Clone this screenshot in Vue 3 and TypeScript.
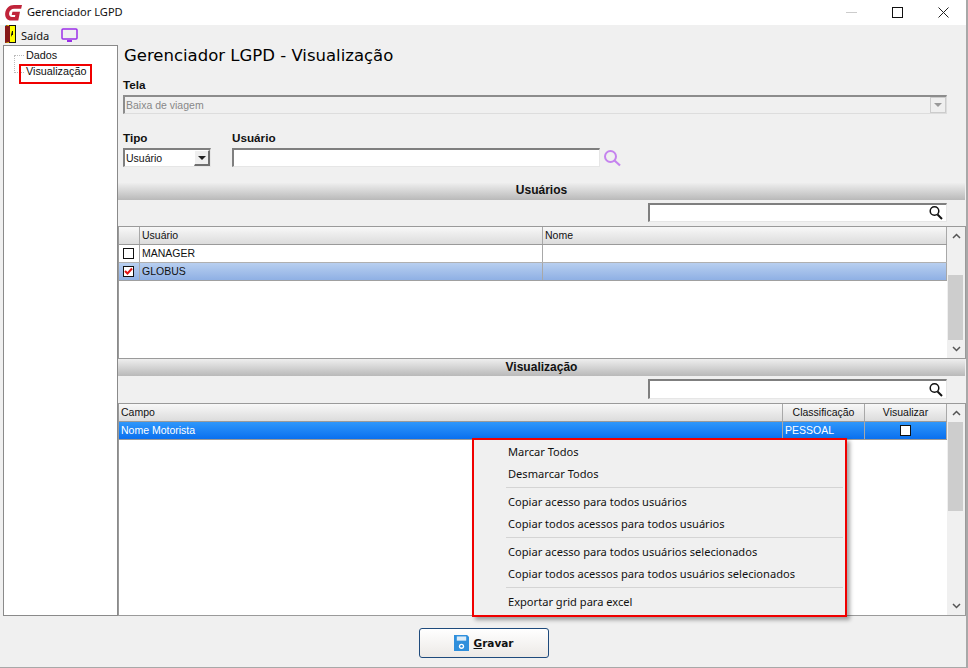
<script setup lang="ts">
const menuGroups: string[][] = [
  ['Marcar Todos', 'Desmarcar Todos'],
  ['Copiar acesso para todos usuários', 'Copiar todos acessos para todos usuários'],
  ['Copiar acesso para todos usuários selecionados', 'Copiar todos acessos para todos usuários selecionados'],
  ['Exportar grid para excel'],
]
</script>

<template>
  <div class="window">
    <header class="titlebar">
      <svg class="logo" viewBox="0 0 16 16" width="17" height="17">
        <path d="M16 1H8.500C4 1 .8 4.200 .2 8.500-.3 12.500 2 15.500 5.500 15.500H12.500l1.600-8.300H7L6.300 10.300h3.400L9.400 12.200H6.500C4.500 12.200 3.600 10.500 3.900 8.500 4.300 6 6.200 4.500 8.500 4.500H15.200z" fill="#c0243a" />
      </svg>
      <span class="title-text">Gerenciador LGPD</span>
      <div class="win-buttons">
        <svg width="11" height="11" viewBox="0 0 11 11"><path d="M0 5.500h11" stroke="#ccc" /></svg>
        <svg width="11" height="11" viewBox="0 0 11 11"><rect x=".5" y=".5" width="10" height="10" fill="none" stroke="#111" /></svg>
        <svg width="11" height="11" viewBox="0 0 11 11"><path d="M.5 .5l10 10M10.500 .5l-10 10" stroke="#222" /></svg>
      </div>
    </header>

    <div class="toolbar">
      <svg class="door" width="11" height="18" viewBox="0 0 11 18">
        <rect x="0" y="0" width="11" height="18" fill="#ffff00" />
        <path d="M10 0h1v18h-1zM4 0h7v1H4zM4 17h7v1H4z" fill="#111" />
        <path d="M0 0l5 1v16l-5 1z" fill="#861818" />
        <rect x="0" y="0" width="1" height="1" fill="#5ad0e8" />
        <path d="M7 6h1v4H7l-1 2v-2z" fill="#111" />
      </svg>
      <span class="exit">Saída</span>
      <svg class="monitor" width="17" height="14" viewBox="0 0 17 14">
        <rect x="1" y="1" width="15" height="10" rx="1" fill="none" stroke="#9a2ee8" stroke-width="1.500" />
        <path d="M6 13h5" stroke="#9a2ee8" stroke-width="2" />
      </svg>
    </div>

    <div class="content">
      <aside class="tree">
        <div class="tree-lines"></div>
        <div class="tree-item">Dados</div>
        <div class="tree-item">Visualização</div>
      </aside>

      <main class="main">
        <h1 class="heading">Gerenciador LGPD - Visualização</h1>

        <div class="field-block">
          <label class="label">Tela</label>
          <div class="combo disabled">
            <span>Baixa de viagem</span>
            <span class="combo-arrow flat"><i></i></span>
          </div>
        </div>

        <div class="filters">
          <div class="tipo">
            <label class="label">Tipo</label>
            <div class="combo small">
              <span>Usuário</span>
              <span class="combo-arrow"><i></i></span>
            </div>
          </div>
          <div class="usuario">
            <label class="label">Usuário</label>
            <div class="user-row">
              <div class="inset user-input"></div>
              <svg class="lookup" width="19" height="19" viewBox="0 0 19 19">
                <circle cx="7.500" cy="7.500" r="5.500" fill="none" stroke="#c583ee" stroke-width="2" />
                <path d="M11.500 11.500L17 16.500" stroke="#c583ee" stroke-width="2.200" />
              </svg>
            </div>
          </div>
        </div>

        <div class="section first">Usuários</div>
        <div class="search-row">
          <div class="inset search">
            <svg width="16" height="16" viewBox="0 0 16 16">
              <circle cx="6.500" cy="6" r="4.300" fill="none" stroke="#111" stroke-width="1.500" />
              <path d="M9.500 9.500L14 14" stroke="#111" stroke-width="2" />
            </svg>
          </div>
        </div>

        <div class="grid users">
          <div class="grid-body">
            <div class="row head">
              <div class="cell c-check"></div>
              <div class="cell c-user">Usuário</div>
              <div class="cell c-fill">Nome</div>
            </div>
            <div class="row">
              <div class="cell c-check"><span class="box"></span></div>
              <div class="cell c-user">MANAGER</div>
              <div class="cell c-fill"></div>
            </div>
            <div class="row picked">
              <div class="cell c-check">
                <span class="box">
                  <svg width="9" height="9" viewBox="0 0 9 9"><path d="M1 4l2.500 2.500L8 1.500" fill="none" stroke="#e01010" stroke-width="2" /></svg>
                </span>
              </div>
              <div class="cell c-user">GLOBUS</div>
              <div class="cell c-fill"></div>
            </div>
          </div>
          <div class="scrollbar">
            <span class="sb-btn"><svg width="9" height="6" viewBox="0 0 9 6"><path d="M1 5l3.500-3.500L8 5" fill="none" stroke="#555" stroke-width="1.500" /></svg></span>
            <span class="thumb-space"></span>
            <span class="thumb short"></span>
            <span class="sb-btn"><svg width="9" height="6" viewBox="0 0 9 6"><path d="M1 1l3.500 3.500L8 1" fill="none" stroke="#555" stroke-width="1.500" /></svg></span>
          </div>
        </div>

        <div class="section second-bar">Visualização</div>
        <div class="search-row second">
          <div class="inset search">
            <svg width="16" height="16" viewBox="0 0 16 16">
              <circle cx="6.500" cy="6" r="4.300" fill="none" stroke="#111" stroke-width="1.500" />
              <path d="M9.500 9.500L14 14" stroke="#111" stroke-width="2" />
            </svg>
          </div>
        </div>

        <div class="grid fields">
          <div class="grid-body">
            <div class="row head">
              <div class="cell c-fill">Campo</div>
              <div class="cell c-class center">Classificação</div>
              <div class="cell c-view center">Visualizar</div>
            </div>
            <div class="row selected">
              <div class="cell c-fill">Nome Motorista</div>
              <div class="cell c-class">PESSOAL</div>
              <div class="cell c-view center"><span class="box"></span></div>
            </div>
          </div>
          <div class="scrollbar">
            <span class="sb-btn"><svg width="9" height="6" viewBox="0 0 9 6"><path d="M1 5l3.500-3.500L8 5" fill="none" stroke="#555" stroke-width="1.500" /></svg></span>
            <span class="thumb long"></span>
            <span class="thumb-space"></span>
            <span class="sb-btn"><svg width="9" height="6" viewBox="0 0 9 6"><path d="M1 1l3.500 3.500L8 1" fill="none" stroke="#555" stroke-width="1.500" /></svg></span>
          </div>
        </div>
      </main>
    </div>

    <footer class="footer">
      <button class="save" type="button">
        <svg width="15" height="16" viewBox="0 0 16 17">
          <path d="M0 0h14l2 2v15H0z" fill="#2f8fdc" />
          <rect x="3" y="1.500" width="10" height="4.500" fill="#dcecf8" />
          <circle cx="8" cy="12" r="2.800" fill="#fff" />
          <circle cx="8" cy="12" r="1.300" fill="#2f8fdc" />
        </svg>
        <span><u>G</u>ravar</span>
      </button>
    </footer>

    <div class="red-mark"></div>

    <div class="context-menu">
      <template v-for="(group, i) in menuGroups" :key="i">
        <div v-if="i > 0" class="menu-sep"></div>
        <div v-for="item in group" :key="item" class="menu-item">{{ item }}</div>
      </template>
    </div>
  </div>
</template>

<style scoped>
.window {
  position: relative;
  width: 968px;
  height: 668px;
  overflow: hidden;
  display: flex;
  flex-direction: column;
  background: #f0f0f0;
  border-right: 2px solid #a8a8a8;
  border-bottom: 1px solid #a8a8a8;
  box-sizing: border-box;
  font-family: "Liberation Sans", Arial, sans-serif;
  font-size: 10.500px;
  color: #111;
}
.titlebar {
  height: 25px;
  flex: none;
  display: flex;
  align-items: center;
  padding-left: 5px;
  background: #fff;
}
.logo { margin-right: 5px; }
.title-text {
  font-family: "Noto Sans", sans-serif;
  font-size: 11.100px;
  padding-bottom: 2px;
}
.win-buttons {
  margin-left: auto;
  display: flex;
  align-items: center;
  gap: 35px;
  padding-right: 17px;
}
.toolbar {
  height: 20px;
  flex: none;
  display: flex;
  align-items: center;
  padding-left: 5px;
  font-family: "Noto Sans", sans-serif;
  font-size: 11.100px;
}
.door { margin-top: -2px; flex: none; }
.exit { margin-left: 5px; }
.monitor { margin-left: 12px; }
.content {
  flex: 1;
  min-height: 0;
  display: flex;
  padding-left: 3px;
}
.tree {
  position: relative;
  width: 115px;
  flex: none;
  box-sizing: border-box;
  background: #fff;
  border: 1px solid #8a8a8a;
  padding: 2px 0 0 22px;
  font-size: 10.800px;
}
.tree-item { height: 16px; line-height: 14px; }
.tree-lines {
  position: absolute;
  left: 10px;
  top: 9px;
  width: 9px;
  height: 16px;
  border-left: 1px dotted #bbb;
  border-top: 1px dotted #bbb;
  border-bottom: 1px dotted #bbb;
}
.main {
  flex: 1;
  min-width: 0;
  display: flex;
  flex-direction: column;
  padding-right: 1px;
}
.heading {
  margin: 0;
  height: 34px;
  line-height: 21px;
  padding-left: 6px;
  font-family: "DejaVu Sans", sans-serif;
  font-size: 16.500px;
  font-weight: 400;
  color: #000;
}
.label {
  display: block;
  height: 16px;
  line-height: 12px;
  font-size: 11.700px;
  font-weight: 700;
}
.field-block {
  padding-left: 5px;
  padding-right: 18px;
}
.inset, .combo {
  box-sizing: border-box;
  background: #fff;
  border-top: 2px solid #7f7f7f;
  border-left: 2px solid #7f7f7f;
  border-right: 1px solid #e6e6e6;
  border-bottom: 1px solid #e6e6e6;
}
.combo {
  height: 19px;
  display: flex;
  align-items: center;
  justify-content: space-between;
  padding-left: 1px;
}
.combo.disabled {
  background: #f0f0f0;
  color: #888;
  border-color: #8c8c8c #ddd #ddd #8c8c8c;
}
.combo.small { width: 88px; }
.combo-arrow {
  width: 16px;
  height: 16px;
  display: flex;
  align-items: center;
  justify-content: center;
  background: #efefef;
  border-right: 2px solid #6f6f6f;
  border-bottom: 2px solid #6f6f6f;
  box-sizing: border-box;
  border-top: 1px solid #fff;
  border-left: 1px solid #fff;
}
.combo-arrow.flat {
  border-color: #ccc;
  border-width: 1px;
  border-style: solid;
}
.combo-arrow i {
  width: 0;
  height: 0;
  border-left: 4px solid transparent;
  border-right: 4px solid transparent;
  border-top: 4px solid #222;
}
.combo-arrow.flat i { border-top-color: #999; }
.filters {
  display: flex;
  gap: 21px;
  padding-left: 5px;
  margin-top: 18px;
}
.user-row {
  display: flex;
  align-items: flex-start;
  gap: 3px;
}
.user-input {
  width: 368px;
  height: 19px;
}
.lookup { margin-top: 1px; }
.section {
  height: 17px;
  flex: none;
  text-align: center;
  line-height: 14px;
  font-size: 12px;
  font-weight: 700;
  background: linear-gradient(#eeeeee, #b9b9b9);
}
.section.first { margin-top: 15px; }
.section.second-bar { line-height: 16px; }
.search-row {
  display: flex;
  justify-content: flex-end;
  padding: 3px 18px 4px 0;
  flex: none;
}
.search {
  width: 299px;
  height: 19px;
  display: flex;
  justify-content: flex-end;
  align-items: center;
  padding-right: 2px;
}
.search-row.second .search { height: 20px; }
.grid {
  display: flex;
  flex: none;
  box-sizing: border-box;
  background: #fff;
  border: 1px solid #9a9a9a;
  margin-right: -1px;
}
.grid.users { height: 133px; }
.grid.fields { flex: 1; min-height: 0; }
.grid-body {
  flex: 1;
  min-width: 0;
}
.row {
  display: flex;
  height: 18px;
  box-sizing: border-box;
  border-bottom: 1px solid #b0b0b0;
}
.row.head {
  background: linear-gradient(#f8f8f8, #dcdcdc);
  border-bottom: 1px solid #9a9a9a;
}
.row.picked {
  background: linear-gradient(#b8cff0, #8fb0e4);
  border-bottom-color: #a0a0a0;
}
.row.selected {
  background: linear-gradient(#2f97fb, #0a70ef);
  color: #fff;
  border-bottom-color: #9a9a9a;
}
.cell {
  box-sizing: border-box;
  display: flex;
  align-items: center;
  padding-left: 2px;
  padding-bottom: 2px;
  border-right: 1px solid #a8a8a8;
  white-space: nowrap;
}
.c-check { width: 21px; padding: 0 1px 0 0; justify-content: center; }
.c-user { width: 403px; }
.c-fill { flex: 1; min-width: 0; }
.c-class { width: 82px; }
.c-view { width: 82px; }
.center { justify-content: center; padding-left: 0; }
.row:not(.head) .c-view { padding-bottom: 0; padding-right: 1px; }
.box {
  width: 11px;
  height: 11px;
  box-sizing: border-box;
  background: #fff;
  border: 1px solid #111;
  display: flex;
  align-items: center;
  justify-content: center;
}
.box svg { flex: none; }
.scrollbar {
  width: 18px;
  flex: none;
  display: flex;
  flex-direction: column;
  background: #f0f0f0;
  box-sizing: border-box;
}
.sb-btn {
  height: 18px;
  flex: none;
  display: flex;
  align-items: center;
  justify-content: center;
}
.thumb { flex: none; background: #cdcdcd; margin: 0 2px 0 1px; }
.thumb.short { height: 65px; }
.thumb.long { height: 89px; }
.thumb-space { flex: 1; }
.footer {
  height: 51px;
  flex: none;
  display: flex;
  justify-content: center;
  align-items: flex-start;
  padding: 12px 0 0 1px;
  box-sizing: border-box;
}
.save {
  width: 130px;
  height: 30px;
  display: flex;
  align-items: center;
  justify-content: center;
  gap: 5px;
  padding: 0;
  border: 1px solid #1e4a7c;
  border-radius: 3px;
  background: linear-gradient(#ffffff, #ece9e6);
  font-family: "DejaVu Sans", sans-serif;
  font-size: 10.500px;
  font-weight: 700;
  color: #111;
}
.red-mark {
  position: absolute;
  left: 19px;
  top: 64px;
  width: 73px;
  height: 20px;
  box-sizing: border-box;
  border: 2px solid #f00000;
}
.context-menu {
  position: absolute;
  left: 472px;
  top: 438px;
  width: 375px;
  height: 179px;
  box-sizing: border-box;
  padding: 1px 2px 0 2px;
  background: #f0f0f0;
  border: 2px solid #f00000;
  box-shadow: 3px 3px 4px rgba(0, 0, 0, .35);
  font-family: "Noto Sans", sans-serif;
  font-size: 11.100px;
  color: #111;
}
.menu-item {
  height: 22px;
  line-height: 21px;
  padding-left: 32px;
}
.menu-sep {
  height: 1px;
  margin: 2px 0 3px 30px;
  background: #d4d4d4;
}
</style>

<style>
html, body { margin: 0; background: #f0f0f0; }
</style>
